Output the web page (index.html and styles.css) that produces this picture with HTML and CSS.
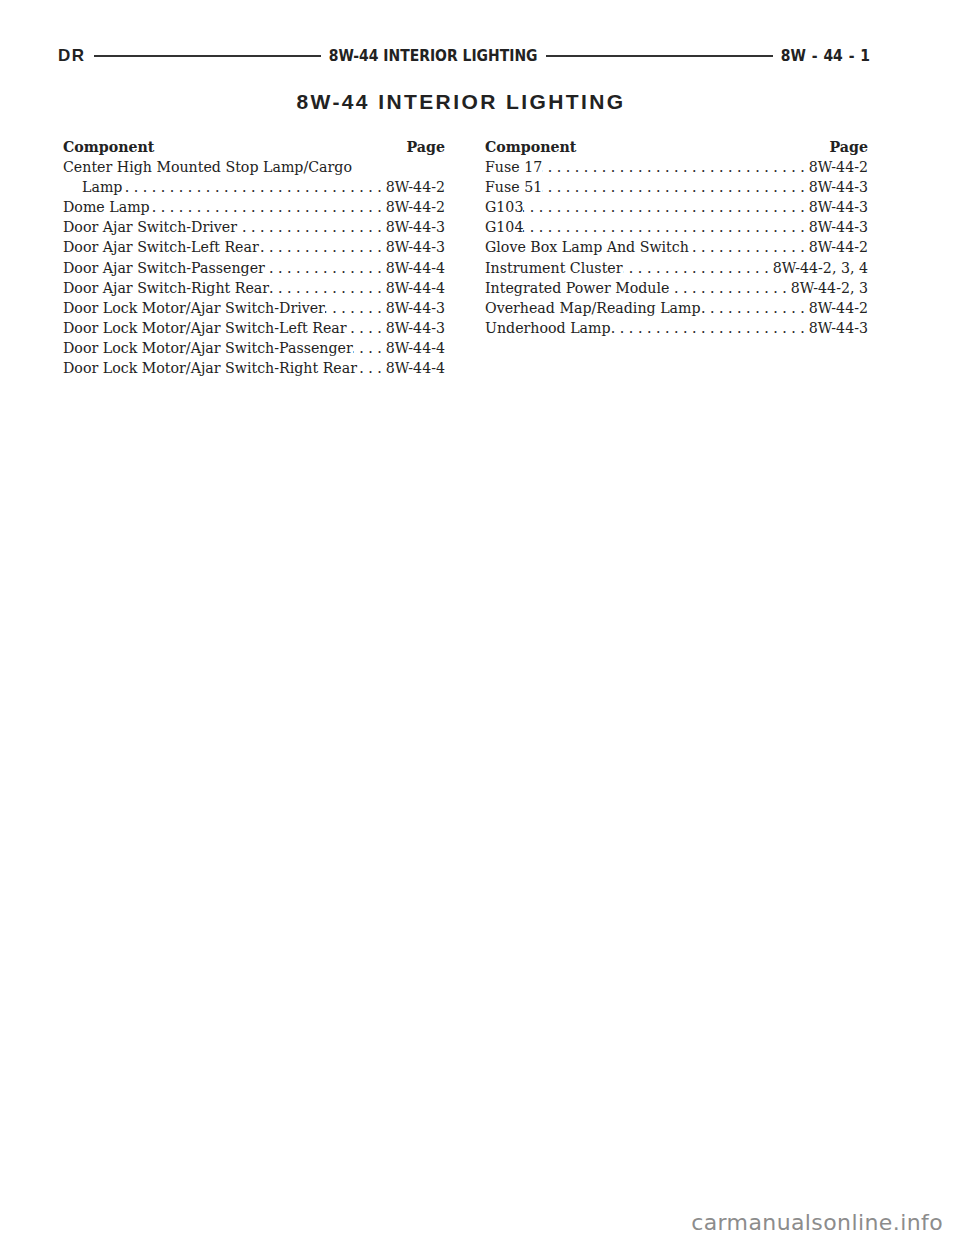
FILE: index.html
```html
<!DOCTYPE html>
<html lang="en">
<head>
    <meta charset="UTF-8">
    <title>8W-44 Interior Lighting</title>
    <link rel="stylesheet" href="styles.css">
</head>
<body>

    <!-- Running header -->
    <div class="running-head">
        <span class="head-code">DR</span>
        <span class="rule"></span>
        <span class="head-title">8W-44 INTERIOR LIGHTING</span>
        <span class="rule"></span>
        <span class="head-page">8W - 44 - 1</span>
    </div>

    <h1 class="title">8W-44 INTERIOR LIGHTING</h1>

    <!-- Component index -->
    <div class="index">
        <div class="column left">
            <div class="row head"><span>Component</span><span>Page</span></div>
            <div class="row plain">Center High Mounted Stop Lamp/Cargo</div>
            <div class="row indent"><span>Lamp</span><span class="leader"></span><span>8W-44-2</span></div>
            <div class="row"><span>Dome Lamp</span><span class="leader"></span><span>8W-44-2</span></div>
            <div class="row"><span>Door Ajar Switch-Driver</span><span class="leader"></span><span>8W-44-3</span></div>
            <div class="row"><span>Door Ajar Switch-Left Rear</span><span class="leader"></span><span>8W-44-3</span></div>
            <div class="row"><span>Door Ajar Switch-Passenger</span><span class="leader"></span><span>8W-44-4</span></div>
            <div class="row"><span>Door Ajar Switch-Right Rear</span><span class="leader"></span><span>8W-44-4</span></div>
            <div class="row"><span>Door Lock Motor/Ajar Switch-Driver</span><span class="leader"></span><span>8W-44-3</span></div>
            <div class="row"><span>Door Lock Motor/Ajar Switch-Left Rear</span><span class="leader"></span><span>8W-44-3</span></div>
            <div class="row"><span>Door Lock Motor/Ajar Switch-Passenger</span><span class="leader"></span><span>8W-44-4</span></div>
            <div class="row"><span>Door Lock Motor/Ajar Switch-Right Rear</span><span class="leader"></span><span>8W-44-4</span></div>
        </div>
        <div class="column right">
            <div class="row head"><span>Component</span><span>Page</span></div>
            <div class="row"><span>Fuse 17</span><span class="leader"></span><span>8W-44-2</span></div>
            <div class="row"><span>Fuse 51</span><span class="leader"></span><span>8W-44-3</span></div>
            <div class="row"><span>G103</span><span class="leader"></span><span>8W-44-3</span></div>
            <div class="row"><span>G104</span><span class="leader"></span><span>8W-44-3</span></div>
            <div class="row"><span>Glove Box Lamp And Switch</span><span class="leader"></span><span>8W-44-2</span></div>
            <div class="row"><span>Instrument Cluster</span><span class="leader"></span><span>8W-44-2, 3, 4</span></div>
            <div class="row"><span>Integrated Power Module</span><span class="leader"></span><span>8W-44-2, 3</span></div>
            <div class="row"><span>Overhead Map/Reading Lamp</span><span class="leader"></span><span>8W-44-2</span></div>
            <div class="row"><span>Underhood Lamp</span><span class="leader"></span><span>8W-44-3</span></div>
        </div>
    </div>

    <div class="watermark">carmanualsonline.info</div>

</body>
</html>
```

FILE: styles.css
```css
body {
    margin: 0;
    width: 960px;
    height: 1242px;
    position: relative;
    overflow: hidden;
    background: #fff;
    color: #222;
    font-family: "DejaVu Serif", "Liberation Serif", serif;
}

/* Running header */
.running-head {
    display: flex;
    align-items: center;
    gap: 8px;
    padding: 46px 90px 0 58px;
    height: 20px;
}

.head-code {
    font-family: "Liberation Sans", Arial, sans-serif;
    font-weight: bold;
    font-size: 17px;
    letter-spacing: 1.5px;
}

.rule {
    flex: 1;
    height: 2px;
    background: #333;
}

.head-title,
.head-page {
    font-family: "Liberation Sans Narrow", "DejaVu Sans Condensed", Arial, sans-serif;
    font-weight: bold;
    font-size: 15.5px;
    white-space: nowrap;
}

.head-page {
    word-spacing: 1px;
}

/* Page title */
.title {
    margin: 24px 38px 0 0;
    text-align: center;
    font-family: "Liberation Sans", Arial, sans-serif;
    font-size: 21px;
    letter-spacing: 2.4px;
    color: #222;
}

/* Index columns */
.index {
    display: flex;
    gap: 40px;
    padding: 23px 0 0 63px;
}

.column {
    min-width: 0;
}

.column.left {
    width: 382px;
}

.column.right {
    width: 383px;
}

.row {
    display: flex;
    font-size: 14.2px;
    line-height: 20.1px;
    white-space: nowrap;
}

.row.head {
    justify-content: space-between;
    font-weight: bold;
}

.row.indent {
    padding-left: 19px;
}

.leader {
    flex: 1;
    min-width: 0;
    overflow: hidden;
    direction: rtl;
    padding: 0 4px;
}

.leader::after {
    content: ". . . . . . . . . . . . . . . . . . . . . . . . . . . . . . . . . . . . . . . . . . . . . . . .";
}

/* Site watermark */
.watermark {
    position: absolute;
    right: 17px;
    bottom: 7px;
    font-family: "DejaVu Sans", "Liberation Sans", sans-serif;
    font-size: 22px;
    letter-spacing: 0.4px;
    color: #8c8c8c;
}
```
